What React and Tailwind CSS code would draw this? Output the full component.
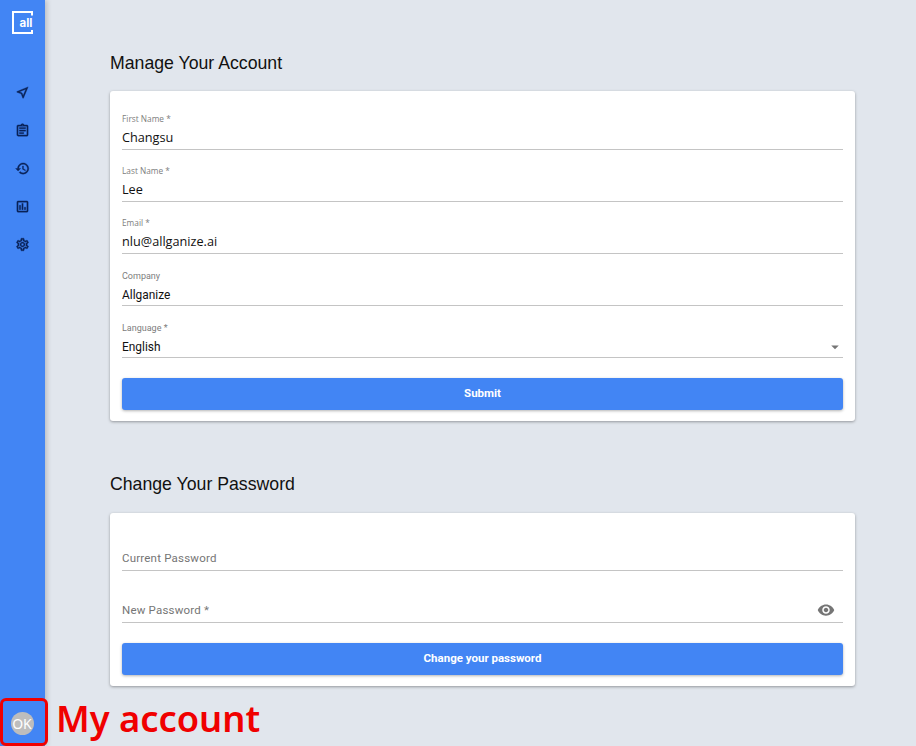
import React from 'react';
import { MdVisibility, MdArrowDropDown } from 'react-icons/md';

const navPaths = [
  'M17.27 6.73l-4.24 10.13-1.32-3.42-.32-.83-.82-.32-3.43-1.33 10.13-4.23M21 3L3 10.53v.98l6.84 2.65L12.48 21h.98L21 3z',
  'M7 15h7v2H7zm0-4h10v2H7zm0-4h10v2H7zm12-4h-4.18C14.4 1.84 13.3 1 12 1c-1.3 0-2.4.84-2.82 2H5c-.14 0-.27.01-.4.04-.39.08-.74.28-1.01.55-.18.18-.33.4-.43.64-.1.23-.16.49-.16.77v14c0 .27.06.54.16.78s.25.45.43.64c.27.27.62.47 1.01.55.13.02.26.03.4.03h14c1.1 0 2-.9 2-2V5c0-1.1-.9-2-2-2zm-7-.25c.41 0 .75.34.75.75s-.34.75-.75.75-.75-.34-.75-.75.34-.75.75-.75zM19 19H5V5h14v14z',
  'M13 3c-4.97 0-9 4.03-9 9H1l3.89 3.89.07.14L9 12H6c0-3.87 3.13-7 7-7s7 3.13 7 7-3.13 7-7 7c-1.93 0-3.68-.79-4.94-2.06l-1.42 1.42C8.27 19.99 10.51 21 13 21c4.97 0 9-4.03 9-9s-4.03-9-9-9zm-1 5v5l4.28 2.54.72-1.21-3.5-2.08V8H12z',
  'M9 17H7v-7h2v7zm4 0h-2V7h2v10zm4 0h-2v-4h2v4zm2 2H5V5h14v14zm0-16H5c-1.1 0-2 .9-2 2v14c0 1.1.9 2 2 2h14c1.1 0 2-.9 2-2V5c0-1.1-.9-2-2-2z',
  'M19.43 12.98c.04-.32.07-.64.07-.98 0-.34-.03-.66-.07-.98l2.11-1.65c.19-.15.24-.42.12-.64l-2-3.46c-.09-.16-.26-.25-.44-.25-.06 0-.12.01-.17.03l-2.49 1c-.52-.4-1.08-.73-1.69-.98l-.38-2.65C14.46 2.18 14.25 2 14 2h-4c-.25 0-.46.18-.49.42l-.38 2.65c-.61.25-1.17.59-1.69.98l-2.49-1c-.06-.02-.12-.03-.18-.03-.17 0-.34.09-.43.25l-2 3.46c-.13.22-.07.49.12.64l2.11 1.65c-.04.32-.07.65-.07.98 0 .33.03.66.07.98l-2.11 1.65c-.19.15-.24.42-.12.64l2 3.46c.09.16.26.25.44.25.06 0 .12-.01.17-.03l2.49-1c.52.4 1.08.73 1.69.98l.38 2.65c.03.24.24.42.49.42h4c.25 0 .46-.18.49-.42l.38-2.65c.61-.25 1.17-.59 1.69-.98l2.49 1c.06.02.12.03.18.03.17 0 .34-.09.43-.25l2-3.46c.12-.22.07-.49-.12-.64l-2.11-1.65zm-1.98-1.71c.04.31.05.52.05.73 0 .21-.02.43-.05.73l-.14 1.13.89.7 1.08.84-.7 1.21-1.27-.51-1.04-.42-.9.68c-.43.32-.84.56-1.25.73l-1.06.43-.16 1.13-.2 1.35h-1.4l-.19-1.35-.16-1.13-1.06-.43c-.43-.18-.83-.41-1.23-.71l-.91-.7-1.06.43-1.27.51-.7-1.21 1.08-.84.89-.7-.14-1.13c-.03-.31-.05-.54-.05-.74s.02-.43.05-.73l.14-1.13-.89-.7-1.08-.84.7-1.21 1.27.51 1.04.42.9-.68c.43-.32.84-.56 1.25-.73l1.06-.43.16-1.13.2-1.35h1.39l.19 1.35.16 1.13 1.06.43c.43.18.83.41 1.23.71l.91.7 1.06-.43 1.27-.51.7 1.21-1.07.85-.89.7.14 1.13zM12 8c-2.21 0-4 1.79-4 4s1.79 4 4 4 4-1.79 4-4-1.79-4-4-4zm0 6c-1.1 0-2-.9-2-2s.9-2 2-2 2 .9 2 2-.9 2-2 2z',
];

const Logo = () => (
  <svg width="22" height="23" viewBox="0 0 22 23" fill="none">
    <path d="M20 4.5V1H1v21h19v-3" stroke="#fff" strokeWidth="2" />
    <text x="7.5" y="15.8" fill="#fff" fontSize="11.5" fontWeight="700" fontFamily="Inter, sans-serif">all</text>
  </svg>
);

const Field = ({ label, value, roboto, children }) => (
  <div className="h-[36px] border-b border-[#c4c4c4] flex flex-col">
    <div className={`text-[#7d7d7d] ${roboto ? "h-[15px] leading-[13px] font-['Roboto',sans-serif] text-[9px]" : "h-[14px] leading-[9px] font-['Open_Sans',sans-serif] text-[8.3px]"}`}>{label}</div>
    <div className={`flex items-center justify-between h-[18px] ${roboto ? 'mt-[1px]' : ''}`}>
      <span className={`leading-[18px] text-[#111] ${roboto ? "font-['Roboto',sans-serif] text-[11.9px]" : "font-['Open_Sans',sans-serif] text-[12.7px]"}`}>{value}</span>
      {children}
    </div>
  </div>
);

const PasswordField = ({ label, children }) => (
  <div className="h-[36px] border-b border-[#c4c4c4] flex items-end justify-between pb-[3px]">
    <span className="font-['Roboto',sans-serif] text-[11.5px] leading-[18px] tracking-[0.2px] text-[#757575]">{label}</span>
    {children}
  </div>
);

const SubmitButton = ({ children }) => (
  <button className="w-full h-[32px] rounded-[3px] bg-[#4285f4] text-white text-[11.5px] font-bold font-['Roboto',sans-serif] shadow-[0_1px_3px_rgba(0,0,0,0.3)]">
    {children}
  </button>
);

const Heading = ({ children }) => (
  <h2 className="h-[22px] pt-[1px] text-[17.7px] leading-[22px] text-[#111] font-['Liberation_Sans',sans-serif]">{children}</h2>
);

export default function App() {
  return (
    <div className="relative flex w-[916px] h-[746px] overflow-hidden bg-[#e1e6ed]">
      <aside className="w-[45px] h-full bg-[#4285f4] shadow-[2px_0_5px_rgba(0,0,0,0.18)] flex flex-col items-center shrink-0">
        <div className="mt-[11px]"><Logo /></div>
        <nav className="mt-[51px] flex flex-col items-center gap-[23px] pr-[1px]">
          {navPaths.map((d, i) => (
            <svg key={i} width="15" height="15" viewBox="0 0 24 24" fill="#0a2358" stroke="#0a2358" strokeWidth="0.6">
              <path d={d} />
            </svg>
          ))}
        </nav>
        <div className="mt-auto mb-[11px] mr-[1px] w-[23px] h-[23px] rounded-full bg-[#bdbdbd] text-white text-[14px] flex items-center justify-center font-['Noto_Sans',sans-serif]">OK</div>
      </aside>

      <main className="flex-1 pl-[65px] pr-[61px] pt-[51px]">
        <Heading>Manage Your Account</Heading>
        <section className="mt-[18px] h-[330px] bg-white rounded-[3px] shadow-[0_1px_3px_rgba(0,0,0,0.35)] px-[12px] pt-[23px]">
          <div className="flex flex-col gap-[16px]">
            <Field label="First Name *" value="Changsu" />
            <Field label="Last Name *" value="Lee" />
            <Field label="Email *" value="nlu@allganize.ai" />
            <Field label="Company" value="Allganize" roboto />
            <Field label="Language *" value="English" roboto>
              <MdArrowDropDown size={18} className="text-[#757575] -mr-[1px]" />
            </Field>
          </div>
          <div className="mt-[20px]"><SubmitButton>Submit</SubmitButton></div>
        </section>

        <div className="mt-[51px]"><Heading>Change Your Password</Heading></div>
        <section className="mt-[19px] h-[173px] bg-white rounded-[3px] shadow-[0_1px_3px_rgba(0,0,0,0.35)] px-[12px] pt-[22px]">
          <div className="flex flex-col gap-[16px]">
            <PasswordField label="Current Password" />
            <PasswordField label="New Password *">
              <MdVisibility size={18} className="text-[#757575] mr-[8px]" />
            </PasswordField>
          </div>
          <div className="mt-[20px]"><SubmitButton>Change your password</SubmitButton></div>
        </section>
      </main>

      {/* annotation over the screenshot */}
      <div className="absolute left-0 top-[698px] w-[48px] h-[48px] rounded-[6px] border-[3px] border-[#f00000]" />
      <div className="absolute left-[56px] top-[693px] text-[36.3px] leading-[50px] font-semibold text-[#f00000] font-['Noto_Sans',sans-serif]">My account</div>
    </div>
  );
}
